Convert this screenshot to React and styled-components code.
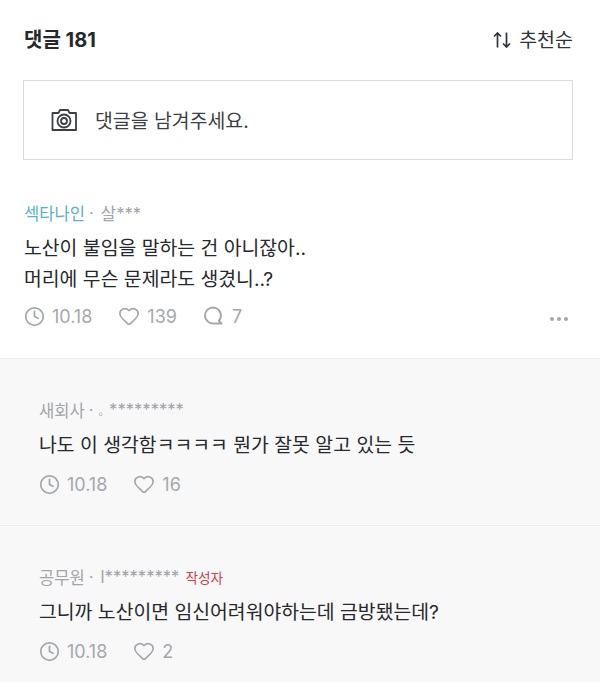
import React from "react";
import styled, { createGlobalStyle } from "styled-components";
import { Clock, Heart } from "lucide-react";

const GlobalStyle = createGlobalStyle`
  body {
    margin: 0;
    background: #fff;
    font-family: Inter, "Noto Sans CJK KR", sans-serif;
  }
`;

const Page = styled.div`
  width: 600px;
  height: 682px;
  overflow: hidden;
`;

const Top = styled.div`
  padding: 26px 27px 0 23px;
`;

const Header = styled.div`
  display: flex;
  justify-content: space-between;
  align-items: center;
  height: 26px;
  padding: 1px 0 0 1px;
  margin-bottom: -1px;
`;

const Title = styled.div`
  font-size: 20px;
  line-height: 26px;
  font-weight: 700;
  color: #26282b;
`;

const Sort = styled.div`
  display: flex;
  align-items: center;
  gap: 8px;
  font-size: 19.5px;
  line-height: 26px;
  color: #303338;
`;

const InputBox = styled.div`
  display: flex;
  align-items: center;
  gap: 18px;
  height: 78px;
  margin-top: 28px;
  padding-left: 27px;
  border: 1px solid #dcdcdc;
`;

const InputText = styled.div`
  font-size: 19.4px;
  margin-top: -1px;
  color: #3c3f44;
`;

const Comment = styled.div`
  padding: ${(p) => (p.$reply ? "39px 24px 0 39px" : "41px 27px 0 24px")};
  height: ${(p) => (p.$reply ? "167px" : "199px")};
  box-sizing: border-box;
  background: ${(p) => (p.$reply ? "#f8f8f8" : "#fff")};
  border-bottom: 1px solid #ececec;
`;

const Meta = styled.div`
  display: flex;
  align-items: center;
  height: 24px;
  font-size: 16.6px;
  color: #a2a5aa;
`;

const Job = styled.span`
  color: ${(p) => (p.$accent ? "#55b3c4" : "#a2a5aa")};
`;

const Dot = styled.span`
  margin: 0 7px 0 4px;
`;

const Ring = styled.span`
  margin-left: -2px;
  font-size: 10.5px;
  line-height: 24px;
  padding-top: 3px;
`;

const AuthorTag = styled.span`
  margin-left: 6px;
  font-size: 13.7px;
  color: #c9404f;
`;

const Body = styled.div`
  margin-top: 8px;
  font-size: 19.35px;
  line-height: 31px;
  color: #26282b;
`;

const Stats = styled.div`
  display: flex;
  align-items: center;
  height: 24px;
  margin-top: ${(p) => (p.$reply ? "11px" : "9px")};
  font-size: 18px;
  color: #a4a8ad;
`;

const Stat = styled.div`
  display: flex;
  align-items: center;
  gap: ${(p) => p.$gap || 7}px;
  margin-right: 26px;
`;

const More = styled.div`
  display: flex;
  gap: 3px;
  margin: 6px 5px 0 auto;
`;

const MoreDot = styled.span`
  width: 4px;
  height: 4px;
  border-radius: 50%;
  background: #a4a8ad;
`;

const SortIcon = () => (
  <svg width="18" height="16" viewBox="0 0 18 16" fill="none" stroke="#303338" strokeWidth="1.7">
    <path d="M4.500 15.500V1M1 4.500l3.500-3.500 3.500 3.500" />
    <path d="M13.500 .5V15M10 11.500l3.500 3.500 3.500-3.500" />
  </svg>
);

const CameraIcon = () => (
  <svg width="26" height="24" viewBox="0 0 26 24" fill="none" stroke="#3c3f44" strokeWidth="1.800">
    <path d="M1.500 5h6l1.500-3h8l1.500 3h6.500v17H1.500z" strokeLinejoin="round" />
    <circle cx="13" cy="13" r="6.500" />
    <circle cx="13" cy="13" r="3" />
  </svg>
);

const BubbleIcon = () => (
  <svg width="20" height="20" viewBox="0 0 20 20" fill="none" stroke="#a4a8ad" strokeWidth="2">
    <path d="M10 1.500a8 8 0 1 0 0 16h8.500l-2.600-2.800A8 8 0 0 0 10 1.500z" strokeLinejoin="round" />
  </svg>
);

const comments = [
  {
    job: "섹타나인",
    accent: true,
    user: "살***",
    lines: ["노산이 불임을 말하는 건 아니잖아..", "머리에 무슨 문제라도 생겼니..?"],
    likes: 139,
    replies: 7,
  },
  {
    job: "새회사",
    ring: true,
    user: "*********",
    lines: ["나도 이 생각함ㅋㅋㅋㅋ 뭔가 잘못 알고 있는 듯"],
    likes: 16,
    reply: true,
  },
  {
    job: "공무원",
    user: "l*********",
    author: true,
    lines: ["그니까 노산이면 임신어려워야하는데 금방됐는데?"],
    likes: 2,
    reply: true,
  },
];

export default function App() {
  return (
    <Page>
      <GlobalStyle />
      <Top>
        <Header>
          <Title>댓글 181</Title>
          <Sort>
            <SortIcon />
            추천순
          </Sort>
        </Header>
        <InputBox>
          <CameraIcon />
          <InputText>댓글을 남겨주세요.</InputText>
        </InputBox>
      </Top>
      {comments.map((c, i) => (
        <Comment key={i} $reply={c.reply}>
          <Meta>
            <Job $accent={c.accent}>{c.job}</Job>
            <Dot>·</Dot>
            {c.ring && <Ring>。</Ring>}
            {c.user}
            {c.author && <AuthorTag>작성자</AuthorTag>}
          </Meta>
          <Body>
            {c.lines.map((line, j) => (
              <div key={j}>{line}</div>
            ))}
          </Body>
          <Stats $reply={c.reply}>
            <Stat>
              <Clock size={21} strokeWidth={2} />
              10.18
            </Stat>
            <Stat>
              <Heart size={22} strokeWidth={1.8} />
              {c.likes}
            </Stat>
            {c.replies && (
              <Stat $gap={9}>
                <BubbleIcon />
                {c.replies}
              </Stat>
            )}
            {!c.reply && (
              <More>
                <MoreDot />
                <MoreDot />
                <MoreDot />
              </More>
            )}
          </Stats>
        </Comment>
      ))}
    </Page>
  );
}
